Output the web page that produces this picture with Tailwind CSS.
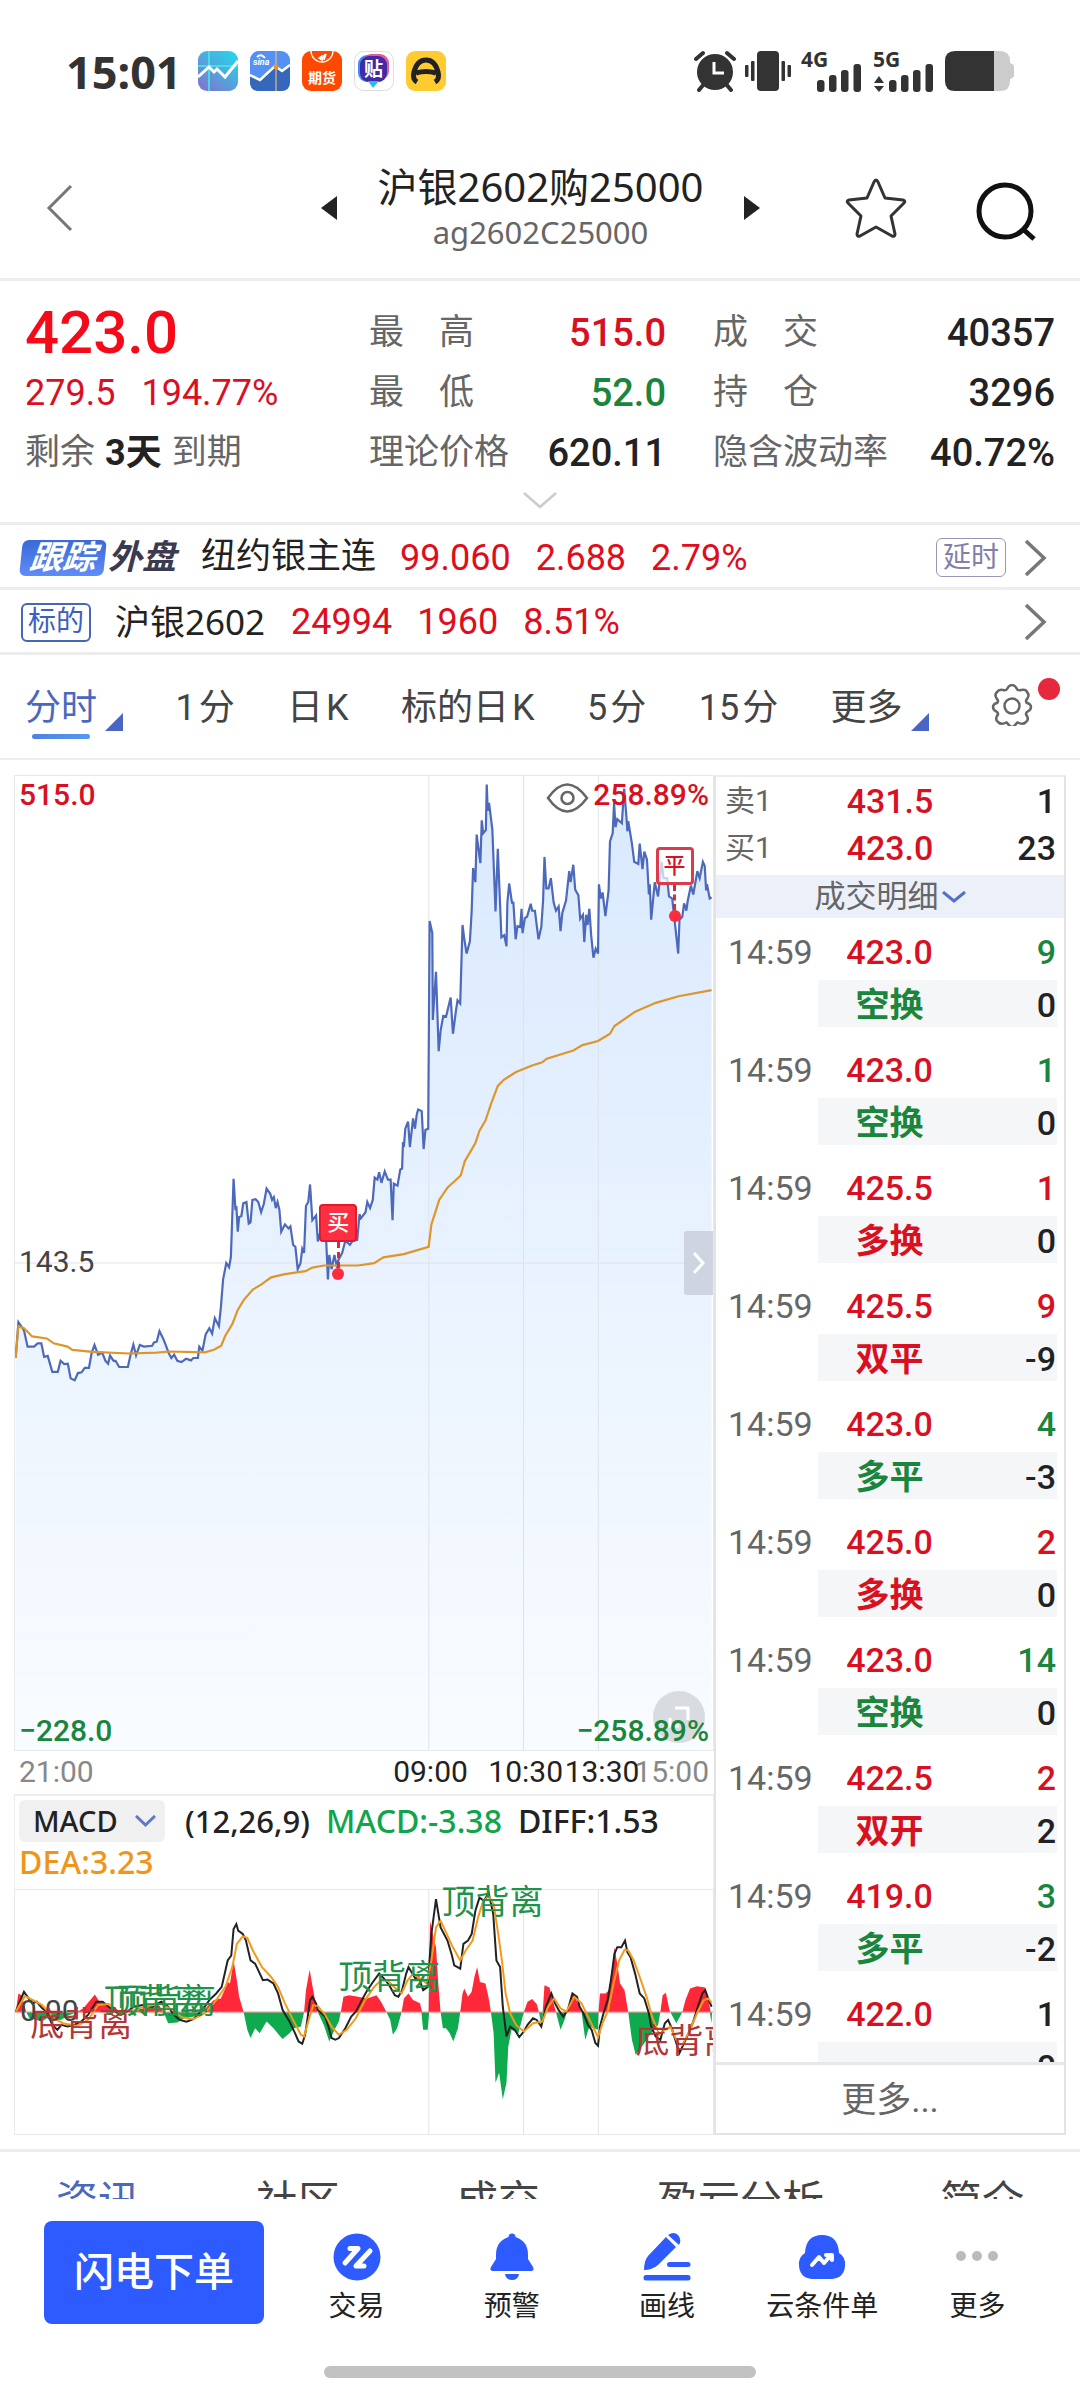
<!DOCTYPE html>
<html lang="zh-CN">
<head>
<meta charset="utf-8">
<meta name="viewport" content="width=device-width, initial-scale=1">
<title>沪银2602购25000</title>
<script src="https://cdn.jsdelivr.net/npm/@tailwindcss/browser@4"></script>
</head>
<body class="bg-white text-[#222] font-['Roboto','Noto_Sans_CJK_SC',sans-serif] overflow-x-hidden">
<div class="flex min-h-screen flex-col">

<!-- status bar -->
<div class="flex h-[142px] items-center justify-between pl-[66px] pr-[66px] text-[#333]">
  <div class="flex items-center gap-3">
    <span class="mr-1 text-[45px] leading-none font-bold font-['Noto_Sans',sans-serif]">15:01</span>
    <svg class="size-10" viewBox="0 0 40 40"><defs><linearGradient id="a1" x1="1" y1="0" x2="0.2" y2="1"><stop offset="0" stop-color="#1fdcee"/><stop offset="1" stop-color="#7d78cf"/></linearGradient></defs><rect width="40" height="40" rx="9" fill="url(#a1)"/><path d="M0 15H40M11 0V40" stroke="#3ff0e8" stroke-width="1.5"/><path d="M0 26 11 16l5 5 3-3 8 8L40 10" fill="none" stroke="#fff" stroke-width="3"/></svg>
    <svg class="size-10" viewBox="0 0 40 40"><rect width="40" height="40" rx="9" fill="#5391f5"/><path d="M0 24l10 5L25 15l7 5 8-6v17q0 9-9 9H9q-9 0-9-9z" fill="#3568ba"/><path d="M0 24l10 5L25 15l7 5 8-6" fill="none" stroke="#fff" stroke-width="2.5"/><path d="M26 0V40" stroke="#e8b878" stroke-width="1.2"/><circle cx="26" cy="16" r="2.5" fill="#f29130"/><path d="M7 6q4-4 8 1" fill="none" stroke="#fff" stroke-width="2"/><text x="3" y="14" font-size="9" font-style="italic" font-weight="700" fill="#fff">sina</text></svg>
    <svg class="size-10" viewBox="0 0 40 40"><rect width="40" height="40" rx="9" fill="#ff4800"/><path d="M9 0a11 11 0 0 0 22 0" fill="none" stroke="#fff" stroke-width="1.3"/><path d="M17 7l3-2v4zM20 9l3-6M22 9l2-6" stroke="#fff" stroke-width="1.5" fill="#fff"/><text x="6" y="32" font-size="14" font-weight="700" fill="#fff">期货</text></svg>
    <svg class="size-10" viewBox="0 0 40 40"><rect x=".5" y=".5" width="39" height="39" rx="9" fill="#fff" stroke="#ddd"/><rect x="4" y="4" width="29" height="27" rx="9" fill="#3d8ffb"/><rect x="8" y="3" width="27" height="26" rx="9" fill="#e05a9c"/><rect x="6" y="5" width="27" height="26" rx="9" fill="#4229a5"/><path d="M14 30h11l-6 7z" fill="#28bdf2"/><text x="10" y="25" font-size="19" font-weight="700" fill="#fff">贴</text></svg>
    <svg class="size-10" viewBox="0 0 40 40"><rect width="40" height="40" rx="9" fill="#ffcb30"/><path d="M11 31q-5-3-3-10Q11 9 20 9t12 12q2 7-3 10M10 22q10-3 20 0" fill="none" stroke="#222" stroke-width="5"/></svg>
  </div>
  <div class="flex items-center">
    <svg class="h-[42px] w-[42px]" viewBox="0 0 42 42" fill="none" stroke="#333"><circle cx="21" cy="22" r="18" fill="#333" stroke="none"/><path d="M2 9l7-6M40 9l-7-6M5 40l5-6M37 40l-5-6" stroke-width="4" stroke-linecap="round"/><path d="M20 12v11h10" stroke="#fff" stroke-width="3"/></svg>
    <svg class="ml-2 h-[42px] w-[48px]" viewBox="0 0 48 42" fill="#333"><rect x="13" y="1" width="22" height="40" rx="4"/><rect x="7" y="11" width="3.5" height="20" rx="1"/><rect x="1" y="15" width="3.5" height="12" rx="1"/><rect x="37.500" y="11" width="3.500" height="20" rx="1"/><rect x="43.500" y="15" width="3.500" height="12" rx="1"/></svg>
    <svg class="ml-[9px] h-[42px] w-[62px] overflow-visible" viewBox="0 0 62 42" fill="#333"><text x="0" y="17" font-size="21" font-weight="700" font-family="Noto Sans">4G</text><rect x="16" y="30" width="7.500" height="12" rx="3"/><rect x="28" y="25" width="7.500" height="17" rx="3"/><rect x="40" y="20" width="7.500" height="22" rx="3"/><rect x="52.500" y="14" width="7.500" height="28" rx="3"/></svg>
    <svg class="ml-[10px] h-[42px] w-[62px] overflow-visible" viewBox="0 0 62 42" fill="#333"><text x="0" y="17" font-size="21" font-weight="700" font-family="Noto Sans">5G</text><path d="M1 33l5-7 5 7zM1 36h10l-5 6z"/><rect x="16" y="30" width="7.500" height="12" rx="3"/><rect x="28" y="25" width="7.500" height="17" rx="3"/><rect x="40" y="20" width="7.500" height="22" rx="3"/><rect x="52.500" y="14" width="7.500" height="28" rx="3"/></svg>
    <svg class="ml-[9px] h-[42px] w-[70px]" viewBox="0 0 70 42"><path d="M50 1h6q10 0 10 10v2q4 1 4 4v8q0 3-4 4v2q0 10-10 10h-6z" fill="#ccc"/><path d="M50 1H11Q1 1 1 11v20q0 10 10 10h39z" fill="#333"/></svg>
  </div>
</div>

<!-- title bar -->
<header class="flex h-[139px] items-center border-b-[3px] border-[#ededed] pb-1 pl-[46px] pr-[42px]">
  <button aria-label="返回" class="w-[275px]"><svg class="h-[48px] w-7" viewBox="0 0 28 48" fill="none" stroke="#777" stroke-width="3"><path d="M25 2 3 24l22 22"/></svg></button>
  <button aria-label="上一个"><svg class="h-6 w-4" viewBox="0 0 16 24"><path d="M16 0v24L0 12z" fill="#222"/></svg></button>
  <div class="flex-1 text-center font-['Noto_Sans','Noto_Sans_CJK_SC',sans-serif]">
    <h1 class="text-[40px] leading-[48px]">沪银2602购25000</h1>
    <p class="text-[31px] leading-[42px] text-[#666]">ag2602C25000</p>
  </div>
  <button aria-label="下一个"><svg class="h-6 w-4" viewBox="0 0 16 24"><path d="M0 0v24l16-12z" fill="#222"/></svg></button>
  <button aria-label="自选" class="ml-[85px]"><svg class="size-[62px]" viewBox="0 0 62 62" fill="none" stroke="#333" stroke-width="3" stroke-linejoin="round"><path d="M31 3q1 0 2 2l7 16 18 2q3 1 1 3L46 39l4 18q0 3-3 2L31 50 15 59q-3 1-3-2l4-18L3 26q-2-2 1-3l18-2 7-16q1-2 2-2z"/></svg></button>
  <button aria-label="搜索" class="ml-[69px] pt-1"><svg class="size-[62px]" viewBox="0 0 62 62" fill="none" stroke="#111" stroke-width="5"><circle cx="29" cy="32" r="26"/><path d="m48 51 10 9"/></svg></button>
</header>

<!-- quote -->
<section class="border-b-[3px] border-[#ededed]">
  <div class="flex h-[202px] justify-between pl-[25px] pr-[25px] pt-[22px] text-[38px] font-medium">
    <div class="w-[344px]">
      <div class="h-[60px] text-[60px] leading-[60px] text-[#f50a19]">423.0</div>
      <div class="flex h-[60px] items-center gap-[26px] text-[36px] text-[#d9101f] font-normal"><span>279.5</span><span>194.77%</span></div>
      <div class="flex h-[60px] items-center gap-[10px] text-[35px] font-normal text-[#666]">剩余<b class="text-[36px] font-bold text-[#222]">3天</b>到期</div>
    </div>
    <dl class="grid w-[297px] grid-cols-[auto_auto] auto-rows-[60px] items-center justify-between">
      <dt class="flex gap-[35px] text-[35px] font-normal text-[#666]"><span>最</span><span>高</span></dt><dd class="text-right text-[#d9101f]">515.0</dd>
      <dt class="flex gap-[35px] text-[35px] font-normal text-[#666]"><span>最</span><span>低</span></dt><dd class="text-right text-[#1a853c]">52.0</dd>
      <dt class="text-[35px] font-normal text-[#666]">理论价格</dt><dd class="text-right">620.11</dd>
    </dl>
    <dl class="ml-[47px] grid flex-1 grid-cols-[auto_auto] auto-rows-[60px] items-center justify-between">
      <dt class="flex gap-[35px] text-[35px] font-normal text-[#666]"><span>成</span><span>交</span></dt><dd class="text-right">40357</dd>
      <dt class="flex gap-[35px] text-[35px] font-normal text-[#666]"><span>持</span><span>仓</span></dt><dd class="text-right">3296</dd>
      <dt class="text-[35px] font-normal text-[#666]">隐含波动率</dt><dd class="text-right">40.72%</dd>
    </dl>
  </div>
  <button aria-label="展开" class="flex h-[39px] w-full justify-center pt-2"><svg class="h-[18px] w-[36px]" viewBox="0 0 36 18" fill="none" stroke="#ccc" stroke-width="2.500"><path d="m2 2 16 14L34 2"/></svg></button>
</section>

<!-- linked contracts -->
<a href="#" class="flex h-[65px] items-center border-b-[3px] border-[#ededed] pt-[3px] pl-[21px] pr-[32px] text-[36px] text-[#e00d1c]">
  <span class="flex h-[36px] w-[84px] -skew-x-6 items-center justify-center rounded-[6px] bg-linear-to-b from-[#3a69d8] to-[#5f8cf8] text-[33px] font-bold italic text-white">跟踪</span>
  <span class="ml-[3px] w-[69px] text-[34px] font-bold italic text-[#3a3a50]">外盘</span>
  <span class="ml-[24px] text-[35px] text-[#222]">纽约银主连</span>
  <span class="ml-[24px]">99.060</span><span class="ml-[25px]">2.688</span><span class="ml-[25px]">2.79%</span>
  <span class="ml-auto flex h-[39px] w-[70px] items-center justify-center rounded-[6px] border border-[#9797bd] text-[28px] text-[#8080a8]">延时</span>
  <svg class="ml-[18px] h-[38px] w-6" viewBox="0 0 24 38" fill="none" stroke="#777" stroke-width="3.500"><path d="m2 2 18 17L2 36"/></svg>
</a>
<a href="#" class="flex h-[65px] items-center border-b-[3px] border-[#ededed] pt-[2px] pl-[21px] pr-[32px] text-[36px] text-[#e00d1c]">
  <span class="flex h-[39px] w-[70px] items-center justify-center rounded-[6px] border-2 border-[#4766b5] text-[28px] text-[#3d60c0]">标的</span>
  <span class="ml-[24px] text-[#222] font-['Noto_Sans','Noto_Sans_CJK_SC',sans-serif] text-[35px]">沪银2602</span>
  <span class="ml-[26px]">24994</span><span class="ml-[25px]">1960</span><span class="ml-[25px]">8.51%</span>
  <svg class="ml-auto h-[38px] w-6" viewBox="0 0 24 38" fill="none" stroke="#777" stroke-width="3.500"><path d="m2 2 18 17L2 36"/></svg>
</a>

<!-- period tabs -->
<nav class="flex h-[105px] items-center justify-between border-b-2 border-[#ededed] pt-[3px] pl-[25px] pr-[20px] text-[36px] text-[#444]">
  <button class="relative flex text-[#4a69bd]">分时<svg class="mt-8 ml-[8px] size-[18px]" viewBox="0 0 18 18"><path d="M18 0v18H0z" fill="#4a66c4"/></svg><span class="absolute left-[7px] top-[53px] h-[5px] w-[58px] rounded-full bg-linear-to-r from-[#5080e0] to-[#559af0]"></span></button>
  <button class="flex gap-[3px]"><span>1</span><span>分</span></button>
  <button class="flex gap-[3px]"><span>日</span><span>K</span></button>
  <button class="flex gap-[3px]"><span>标的日</span><span>K</span></button>
  <button class="flex gap-[3px]"><span>5</span><span>分</span></button>
  <button class="flex gap-[3px]"><span>15</span><span>分</span></button>
  <button class="mr-[10px] flex">更多<svg class="mt-8 ml-[8px] size-[18px]" viewBox="0 0 18 18"><path d="M18 0v18H0z" fill="#4a66c4"/></svg></button>
  <button aria-label="设置" class="relative flex w-[69px] pb-[6px]"><svg class="size-[42px]" viewBox="0 0 42 42" fill="none" stroke="#666" stroke-width="2.500" stroke-linejoin="round"><path d="M16 5q2-4 5-4t5 4q1 2 4 1 5-1 6 2 3 3 0 7-2 2 0 4 4 1 4 4t-4 5q-2 2 0 4 2 4-1 6-3 3-7 1-2-1-3 1-2 3-4 3t-4-3q-1-2-3-1-4 2-7-1-3-2-1-6 2-2 0-4-4-2-4-5t4-4q2-2 0-4-3-4 0-7 2-3 6-2 3 1 4-1z"/><circle cx="21" cy="22" r="7.500"/></svg><span class="absolute right-0 top-[-6px] size-[22px] rounded-full bg-[#e5283c]"></span></button>
</nav>

<!-- chart and order book -->
<main class="flex border-b-[3px] border-[#ededed] px-[14px] pt-[15px] pb-[14px]">
  <section class="min-w-0 flex-1 text-[30px] leading-[36px]">
    <div class="relative h-[976px] border border-[#e6e8ec] font-medium">
      <svg class="absolute inset-0 h-full w-full" viewBox="0 0 700 976" preserveAspectRatio="none" fill="none">
        <defs><linearGradient id="fill" x1="0" y1="0" x2="0" y2="1"><stop offset="0" stop-color="#d9e9fe"/><stop offset="1" stop-color="#f9fcff"/></linearGradient></defs>
        <path id="area" fill="url(#fill)"/>
        <path d="M0 488H700M415 0V976M510 0V976M585 0V976" stroke="#dfe2ea" stroke-width="1"/>
        <path id="price" stroke="#4c69bb" stroke-width="2.200"/>
        <path id="avg" stroke="#dd962a" stroke-width="2.200"/>
      </svg>
      <span class="absolute left-1 top-px text-[#d9101f]">515.0</span>
      <span class="absolute right-1 top-px text-[#d9101f]">258.89%</span>
      <svg class="absolute right-[124px] top-[7px] h-[30px] w-[43px]" viewBox="0 0 43 30" fill="none" stroke="#666" stroke-width="2.500"><path d="M2 15Q21-12 41 15 21 42 2 15z"/><circle cx="21.500" cy="15" r="6"/></svg>
      <span class="absolute left-1 top-[468px] font-normal text-[#444]">143.5</span>
      <span class="absolute right-[8px] bottom-[7px] flex size-[52px] items-center justify-center rounded-full bg-[#d8dce0]"><svg class="size-6" viewBox="0 0 24 24" fill="none" stroke="#fff" stroke-width="3"><path d="M8 3h13v12M3 13v8h9"/></svg></span>
      <span class="absolute left-1 bottom-px text-[#1a853c]">−228.0</span>
      <span class="absolute right-1 bottom-px text-[#1a853c]">−258.89%</span>
      <button aria-label="收起" class="absolute right-0 top-[455px] flex h-16 w-[29px] items-center justify-center rounded-l-[3px] bg-[#cbd1dd]/90"><svg class="h-[22px] w-3" viewBox="0 0 12 22" fill="none" stroke="#fff" stroke-width="3"><path d="m1 1 9 10-9 10"/></svg></button>
      <div class="absolute left-[46.3%] top-[428px] flex w-[38px] -translate-x-1/2 flex-col items-center">
        <span class="flex h-[38px] w-[38px] items-center justify-center rounded-[4px] border-2 border-[#e01b2e] bg-[#ff2f42] text-[22px] text-white">买</span>
        <span class="h-[26px] border-l-3 border-dashed border-[#d92a3a]"></span><span class="size-3 rounded-full bg-[#fb2c40]"></span>
      </div>
      <div class="absolute left-[94.5%] top-[71px] flex w-[38px] -translate-x-1/2 flex-col items-center">
        <span class="flex h-[38px] w-[38px] items-center justify-center rounded-[4px] border-3 border-[#da3c4c] bg-white/70 text-[22px] text-[#d9101f]">平</span>
        <span class="h-[25px] border-l-3 border-dashed border-[#d92a3a]"></span><span class="size-3 rounded-full bg-[#fb2c40]"></span>
      </div>
    </div>
    <div class="relative h-[43px] text-[#222]">
      <span class="absolute left-[5px] top-[3px] text-[#888]">21:00</span>
      <span class="absolute right-[5px] top-[3px] text-[#888]">15:00</span>
      <span class="absolute left-[59.5%] top-[3px] -translate-x-1/2">09:00</span>
      <span class="absolute left-[73.1%] top-[3px] -translate-x-1/2">10:30</span>
      <span class="absolute left-[84%] top-[3px] -translate-x-1/2">13:30</span>
    </div>
    <div class="h-[95px] border-x border-t-2 border-[#ededed] px-1 pt-[4px] font-medium font-['Noto_Sans',sans-serif] text-[32px]">
      <div class="flex h-[41px] items-center whitespace-nowrap">
        <label class="relative mr-5 block"><span class="sr-only">指标</span>
          <select class="h-[42px] w-[146px] appearance-none rounded-[6px] bg-[#f0f0f0] pl-[14px] text-[29px] leading-[42px]"><option>MACD</option></select>
          <svg class="absolute right-[9px] top-[15px] h-3 w-[21px]" viewBox="0 0 21 12" fill="none" stroke="#5f78c4" stroke-width="3"><path d="m1 1 9.500 9L20 1"/></svg>
        </label>
        <span class="text-[31px]">(12,26,9)</span><span class="ml-4 text-[#0fa54a]">MACD:-3.38</span><span class="ml-4">DIFF:1.53</span>
      </div>
      <div class="h-[42px] leading-[42px] text-[#f0951a]">DEA:3.23</div>
    </div>
    <div class="relative h-[246px] overflow-x-clip border border-[#e6e8ec]">
      <svg class="absolute inset-0 h-full w-full" viewBox="0 0 700 246" preserveAspectRatio="none" fill="none">
        <path d="M415 0V246M510 0V246M585 0V246" stroke="#dfe2ea" stroke-width="1"/>
        <path id="up" fill="#ff2839"/><path id="down" fill="#0fa94e"/>
        <path d="M0 123H700" stroke="#e88" stroke-width="1"/>
        <path id="diff" stroke="#222" stroke-width="2"/><path id="dea" stroke="#f39a1d" stroke-width="2"/>
      </svg>
      <span class="absolute left-[5px] top-[103px] text-[#444]">0.00</span>
      <div class="text-[34px] text-[#1f934a]">
        <span class="absolute left-[61.100%] top-[-6px] whitespace-nowrap">顶背离</span>
        <span class="absolute left-[46.300%] top-[69px] whitespace-nowrap">顶背离</span>
        <span class="absolute left-[12.700%] top-[93px] whitespace-nowrap">顶背离</span>
        <span class="absolute left-[14.200%] top-[93px] whitespace-nowrap">顶背离</span>
      </div>
      <div class="text-[34px] text-[#b23636]">
        <span class="absolute left-[2.200%] top-[116px] whitespace-nowrap">底背离</span>
        <span class="absolute left-[88.900%] top-[133px] whitespace-nowrap">底背离</span>
      </div>
    </div>
  </section>

  <section class="flex h-[1360px] w-[352px] flex-col border-2 border-[#e3e3e3] border-t-[#ededed] text-[34px] leading-none">
    <table class="w-full table-fixed">
      <tbody>
      <tr class="h-[47px]"><th scope="row" class="w-[94px] pl-[9px] text-left text-[30px] font-normal text-[#666]">卖1</th><td class="w-[160px] text-center font-medium text-[#d9101f]">431.5</td><td class="pr-[8px] text-right font-medium">1</td></tr>
      <tr class="h-[47px]"><th scope="row" class="w-[94px] pl-[9px] text-left text-[30px] font-normal text-[#666]">买1</th><td class="text-center font-medium text-[#d9101f]">423.0</td><td class="pr-[8px] text-right font-medium">23</td></tr>
      </tbody>
    </table>
    <button class="mt-[4px] flex h-[43px] shrink-0 items-center justify-center bg-[#ecf0f9] text-[31px] text-[#666]">成交明细<svg class="ml-[3px] h-3 w-6" viewBox="0 0 24 12" fill="none" stroke="#5670c8" stroke-width="3"><path d="m1 1 11 9L23 1"/></svg></button>
    <div class="min-h-0 flex-1 overflow-hidden pl-[12px] pr-[7px]">
      <table class="w-full table-fixed"><colgroup><col class="w-[90px]"><col class="w-[143px]"><col></colgroup><tbody id="ticks"></tbody></table>
    </div>
    <button class="h-[71px] shrink-0 border-t-[3px] border-[#e8e8e8] pt-[2px] text-[35px] text-[#666]">更多...</button>
  </section>
</main>

<!-- information tabs, cut off by the bottom bar -->
<nav class="flex h-[47px] justify-between overflow-hidden px-[56px] pt-[29px] text-[42px] leading-[42px] text-[#444]">
  <a href="#" class="text-[#4a69bd]">资讯</a><a href="#">社区</a><a href="#">成交</a><a href="#">盈亏分析</a><a href="#">简介</a>
</nav>

<!-- bottom bar -->
<footer class="bg-white">
  <div class="flex pt-[22px] pl-[44px] pr-[25px] text-[28px] leading-[34px]">
    <button class="mr-[15px] h-[103px] w-[220px] rounded-[8px] bg-[#2e5bff] text-[40px] font-medium text-white">闪电下单</button>
    <div class="flex flex-1 pt-3">
      <button class="flex flex-1 flex-col items-center gap-[9px]"><svg class="size-12" viewBox="0 0 48 48"><circle cx="24" cy="24" r="23.500" fill="#2e5bff"/><path d="M17 15.500h8L12 30M31 33h-8L37 18" fill="none" stroke="#fff" stroke-width="5" stroke-linecap="round" stroke-linejoin="round"/></svg>交易</button>
      <button class="flex flex-1 flex-col items-center gap-[9px]"><svg class="size-12" viewBox="0 0 48 48" fill="#2e5bff"><path d="M20.500 4q0-3.500 3.500-3.500T27.500 4Q40 8 40 22v4l5 8q2 4-3 4H6q-5 0-3-4l5-8v-4Q8 8 20.500 4zM17 41h14q-1 6-7 6t-7-6z"/></svg>预警</button>
      <button class="flex flex-1 flex-col items-center gap-[9px]"><svg class="size-12" viewBox="0 0 48 48" fill="#2e5bff"><path d="M23 4 33 14 15 32Q9 37 1 37q0-9 4-14zM25 2q6-4 10 0t1 10z"/><rect x="24" y="29" width="23.500" height="5" rx="2.500"/><rect x="0.500" y="42" width="47" height="5.500" rx="2.500"/></svg>画线</button>
      <button class="flex flex-1 flex-col items-center gap-[9px]"><svg class="size-12" viewBox="0 0 48 48"><path d="M7 20Q8 2 24 2t17 18q7 4 6 13-1 12-13 13H14Q2 45 1 33q-1-9 6-13z" fill="#2e5bff"/><path d="m14 32 7-8 5 6 7-8M28 22h6v5" fill="none" stroke="#fff" stroke-width="4" stroke-linecap="round" stroke-linejoin="round"/></svg>云条件单</button>
      <button class="flex flex-1 flex-col items-center gap-[9px]"><svg class="size-12" viewBox="0 0 48 48" fill="#bbb"><circle cx="8" cy="23" r="5"/><circle cx="24" cy="23" r="5"/><circle cx="40" cy="23" r="5"/></svg>更多</button>
    </div>
  </div>
  <div class="mx-auto mt-[42px] mb-[21px] h-3 w-2/5 rounded-full bg-[#c2c2c2]"></div>
</footer>
</div>

<script>
const $ = id => document.getElementById(id);
const RED = 'text-[#d9101f]', GREEN = 'text-[#1a853c]', BLACK = 'text-[#222]';
const ticks = [
  ['423.0', 9, GREEN, '空换', GREEN, 0], ['423.0', 1, GREEN, '空换', GREEN, 0],
  ['425.5', 1, RED, '多换', RED, 0], ['425.5', 9, RED, '双平', RED, -9],
  ['423.0', 4, GREEN, '多平', GREEN, -3], ['425.0', 2, RED, '多换', RED, 0],
  ['423.0', 14, GREEN, '空换', GREEN, 0], ['422.5', 2, RED, '双开', RED, 2],
  ['419.0', 3, GREEN, '多平', GREEN, -2], ['422.0', 1, BLACK, '', RED, 0]
];
$('ticks').innerHTML = ticks.map(([p, q, qc, n, nc, d]) => `
  <tr class="h-[62px]"><td class="pt-[6px] text-[#666]">14:59</td><td class="pt-[6px] text-center font-medium text-[#d9101f]">${p}</td><td class="pt-[6px] pr-px text-right font-medium ${qc}">${q}</td></tr>
  <tr class="h-[47px]"><td></td><td class="bg-[#f5f6f8] pt-[2px] text-center font-bold ${nc}">${n}</td><td class="bg-[#f5f6f8] pt-[2px] pr-px text-right font-medium">${d}</td></tr>
  <tr class="h-[9px]"><td colspan="3"></td></tr>`).join('');

// series are stored in raw plot units and projected to each pane
const KX = 1 / 2.178;
const project = (s, ky, oy) => s.trim().split(/\s+/).map(t => { const [x, y] = t.split(',').map(Number); return (x * KX - 14).toFixed(1) + ' ' + (y * ky - oy).toFixed(1); });
const line = (s, ky, oy) => 'M' + project(s, ky, oy).join('L');
const price = `32,1468 38,1380 50,1400 58,1440 72,1440 80,1432 88,1432 94,1465 102,1463 112,1502 124,1502 130,1475 138,1483 146,1482 152,1518 161,1523 168,1505 176,1503 183,1492 192,1492 198,1455 204,1436 212,1460 221,1455 228,1475 234,1482 238,1462 246,1475 250,1475 258,1490 277,1490 283,1460 289,1435 295,1462 303,1436 312,1440 330,1438 334,1430 340,1428 346,1402 354,1420 360,1437 366,1455 372,1468 378,1460 385,1475 394,1478 404,1470 415,1474 420,1468 430,1468 433,1440 440,1450 447,1410 455,1395 461,1408 467,1370 476,1390 480,1345 485,1275 492,1235 498,1245 502,1220 508,1028 512,1105 514,1095 517,1158 520,1122 525,1120 529,1088 536,1085 541,1138 545,1135 549,1080 556,1078 562,1085 568,1110 574,1090 580,1052 588,1065 592,1080 596,1073 600,1100 604,1085 608,1105 612,1158 620,1140 628,1150 632,1145 638,1190 643,1195 648,1250 654,1235 658,1200 662,1210 666,1095 671,1085 675,1042 680,1130 688,1118 692,1182 697,1160 703,1140 710,1175 714,1275 717,1215 722,1250 728,1215 733,1240 738,1225 745,1210 752,1180 762,1190 768,1180 778,1178 783,1115 786,1125 796,1110 800,1085 806,1100 812,1080 816,1025 822,1030 826,1012 831,1038 838,1010 845,1030 851,1030 855,1130 858,1040 866,1045 872,1005 876,1003 878,938 880,950 883,905 889,888 893,950 900,880 904,905 908,870 911,858 919,862 923,955 927,908 933,905 936,395 942,425 943,638 950,520 956,715 960,665 966,628 972,630 982,583 987,672 994,612 997,590 1003,598 1008,405 1012,440 1017,475 1024,445 1028,370 1031,265 1036,300 1039,183 1047,253 1050,148 1053,180 1059,172 1061,60 1063,125 1066,105 1073,170 1080,372 1085,218 1093,435 1099,430 1104,457 1106,350 1110,303 1116,350 1119,350 1124,440 1128,408 1134,410 1137,365 1139,425 1144,388 1149,385 1157,353 1160,370 1166,370 1174,440 1180,410 1184,345 1187,238 1191,315 1196,315 1201,290 1207,350 1212,370 1218,360 1222,420 1226,375 1234,345 1241,273 1244,300 1250,257 1254,318 1261,332 1265,390 1271,380 1274,447 1278,380 1281,405 1285,365 1289,430 1294,485 1299,463 1304,475 1306,305 1310,340 1314,325 1320,383 1327,320 1330,200 1336,180 1339,105 1342,165 1346,145 1356,155 1361,70 1366,140 1368,175 1370,150 1378,205 1383,250 1392,255 1395,205 1401,268 1405,225 1411,245 1415,330 1417,305 1420,392 1428,300 1435,335 1443,250 1447,290 1455,290 1459,335 1466,340 1470,380 1479,475 1482,392 1488,385 1492,352 1497,370 1500,345 1507,308 1512,330 1521,273 1526,290 1533,250 1537,260 1540,320 1542,305 1548,340 1552,337`;
const avg = `32,1468 38,1390 50,1395 68,1415 100,1420 115,1432 145,1440 156,1448 200,1453 280,1457 340,1455 370,1452 445,1454 465,1448 481,1438 490,1413 505,1385 517,1350 530,1326 550,1300 568,1288 590,1270 620,1262 665,1255 680,1246 705,1241 780,1241 815,1235 835,1221 880,1213 934,1195 940,1140 950,1105 957,1080 975,1050 1004,1020 1013,985 1025,962 1036,940 1045,910 1058,885 1070,845 1085,800 1098,785 1125,766 1160,750 1182,742 1192,733 1250,713 1270,700 1304,690 1330,672 1340,653 1385,618 1430,596 1480,580 1552,565`;
$('price').setAttribute('d', line(price, 1 / 2.45, 16));
$('area').setAttribute('d', line(price, 1 / 2.45, 16) + 'V976H0Z');
$('avg').setAttribute('d', line(avg, 1 / 2.45, 16));

const up = `32,937 38,880 45,885 55,937 165,937 180,925 195,900 205,883 215,905 230,910 240,925 250,937 290,937 310,925 345,915 355,937 440,937 450,920 465,900 480,895 488,870 495,845 500,850 508,780 515,840 520,890 530,937 662,937 666,870 674,808 682,870 690,930 692,937 742,937 748,890 760,885 780,890 800,895 820,885 830,905 842,937 875,937 880,895 890,880 900,900 915,910 920,937 934,937 937,660 943,700 950,740 955,850 960,937 1003,937 1008,880 1012,865 1020,890 1028,875 1034,830 1040,800 1046,845 1058,850 1066,900 1070,937 1142,937 1150,905 1160,897 1170,912 1175,937 1183,937 1187,855 1198,862 1205,900 1212,937 1235,937 1250,880 1262,915 1268,937 1305,937 1308,880 1320,880 1328,870 1335,800 1340,740 1346,790 1352,850 1362,870 1370,937 1440,937 1445,885 1452,878 1460,930 1462,937 1488,937 1495,900 1505,865 1520,858 1538,862 1545,900 1550,937`;
const down = `55,937 62,955 90,965 100,955 130,960 150,945 165,937 355,937 365,970 385,968 400,955 420,950 440,937 530,937 538,990 545,1015 555,985 565,1000 580,965 595,985 610,1010 615,1018 630,1000 640,985 655,980 662,937 692,937 705,975 717,1025 730,985 738,965 742,937 842,937 850,960 856,1005 865,985 875,937 918,937 922,990 932,990 935,937 960,937 965,985 972,985 980,1000 988,1025 998,985 1003,937 1070,937 1076,1000 1080,1150 1088,1120 1096,1200 1104,1150 1108,1040 1115,990 1130,1000 1142,937 1175,937 1180,975 1184,937 1212,937 1222,990 1232,955 1235,937 1268,937 1276,1020 1285,980 1304,990 1305,937 1370,937 1378,1020 1386,1065 1400,1040 1420,1000 1435,975 1440,937 1462,937 1475,970 1488,937 1548,937 1552,970 1553,937`;
const diff = `32,935 50,875 58,890 68,910 78,905 90,925 100,935 112,975 123,990 132,975 145,980 160,975 175,965 190,945 208,905 222,905 235,920 250,935 262,945 275,935 290,920 310,915 330,920 350,905 365,920 378,945 390,960 405,965 420,958 440,930 455,900 470,880 482,860 495,780 503,765 508,685 514,670 518,690 528,700 535,720 545,780 555,790 572,840 582,838 595,850 605,880 615,930 630,965 642,1000 650,1025 658,1032 664,1005 668,970 675,900 680,890 688,910 692,930 700,940 708,950 715,980 722,1015 730,1020 738,1015 752,985 765,950 775,935 788,900 800,870 815,840 826,820 840,840 850,860 860,885 868,890 876,870 885,820 890,800 905,835 912,830 922,870 932,860 940,700 950,595 960,680 975,720 985,765 990,795 1003,805 1010,730 1020,720 1028,700 1036,630 1045,590 1055,600 1065,575 1075,640 1082,780 1090,800 1096,920 1104,1010 1112,980 1122,990 1132,1012 1142,995 1150,975 1162,955 1170,960 1180,980 1190,920 1202,880 1210,910 1218,930 1228,950 1238,930 1248,880 1258,890 1264,920 1272,940 1282,975 1290,990 1298,1030 1304,1038 1308,980 1316,940 1325,900 1332,840 1340,760 1346,740 1355,740 1363,720 1368,755 1375,770 1385,820 1395,880 1405,895 1415,940 1420,980 1430,1010 1440,1020 1450,970 1457,960 1465,985 1475,1030 1482,1060 1492,1030 1502,1000 1512,965 1522,920 1532,880 1538,870 1546,900 1552,920`;
const dea = `32,935 52,888 70,900 90,915 115,955 135,970 165,978 190,960 212,915 235,912 260,938 290,930 320,918 350,912 375,930 395,952 420,958 445,940 470,900 490,860 505,800 515,730 528,707 538,712 550,750 570,800 590,830 605,860 620,910 640,965 655,1005 662,1010 672,960 682,915 692,918 708,945 722,980 738,1005 755,990 775,955 795,900 815,860 830,840 845,842 862,865 875,880 888,840 900,820 915,835 930,850 940,780 950,680 960,660 972,695 985,735 1003,780 1015,750 1030,720 1042,650 1052,605 1065,585 1076,610 1086,700 1094,780 1102,880 1112,940 1125,975 1142,995 1162,970 1182,965 1195,920 1208,895 1222,925 1235,935 1252,890 1268,910 1282,950 1304,1012 1314,970 1326,930 1338,850 1350,780 1362,748 1370,750 1382,780 1395,830 1410,890 1422,950 1438,1005 1450,990 1462,980 1478,1030 1488,1035 1505,990 1520,940 1535,900 1545,895 1552,908`;
$('up').setAttribute('d', line(up, 1 / 3, 189) + 'Z');
$('down').setAttribute('d', line(down, 1 / 3, 189) + 'Z');
$('diff').setAttribute('d', line(diff, 1 / 3, 189));
$('dea').setAttribute('d', line(dea, 1 / 3, 189));
</script>
</body>
</html>
